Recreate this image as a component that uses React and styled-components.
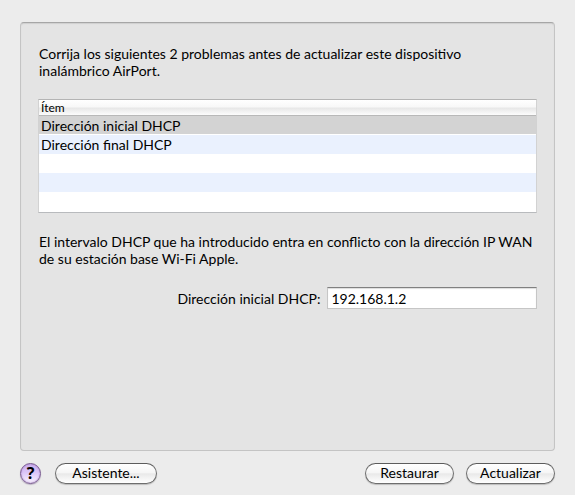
import React, { useState } from "react";
import styled, { createGlobalStyle } from "styled-components";

const GlobalStyle = createGlobalStyle`
  * {
    box-sizing: border-box;
  }
  body {
    margin: 0;
    background-color: #ececec;
    color: #000;
    font-family: "Lucida Grande", Lato, sans-serif;
    font-size: 14px;
    line-height: 17px;
  }
`;

const Window = styled.div`
  display: flex;
  flex-direction: column;
  min-height: 100vh;
  padding: 22px 20px 11px;
`;

const Panel = styled.main`
  flex: 1;
  padding: 22px 17px;
  background-color: #e4e4e4;
  border: 1px solid #c4c4c4;
  border-top-color: #a6a6a6;
  border-radius: 4px;
  box-shadow: inset 0 1px 1px #cfcfcf;
`;

const Message = styled.p`
  margin: 0 -4px 0 0;
  padding-left: 1px;
`;

const ProblemTable = styled.table`
  width: 100%;
  margin: 20px 0;
  border: 1px solid #d2d2d2;
  border-top-color: #b4b4b4;
  border-bottom: 1px solid #b8babd;
  border-spacing: 0;
  background-color: #fff;
`;

const HeaderCell = styled.th`
  height: 16px;
  padding: 0 2px;
  border-bottom: 1px solid #b8b8b8;
  background: linear-gradient(#fff 0%, #f8f8f8 45%, #e8e8e8 55%, #fcfcfc 100%);
  font-size: 12px;
  font-weight: normal;
  line-height: 15px;
  text-align: left;
`;

const Row = styled.tr`
  background-color: ${(props) => (props.$striped ? "#eaf1fe" : "#fff")};
  background-color: ${(props) => props.$selected && "#d3d3d3"};

  &:last-child td {
    height: 20px;
  }
`;

const Cell = styled.td`
  height: 19px;
  padding: ${(props) => (props.$selected ? "1px 2px 0" : "0 2px")};
  border-bottom: ${(props) => (props.$selected ? "1px solid #fff" : "none")};
  line-height: 17px;
`;

const Field = styled.div`
  display: flex;
  align-items: center;
  justify-content: flex-end;
  gap: 7px;
  margin-top: 20px;
`;

const Input = styled.input`
  width: 42%;
  height: 22px;
  padding: 1px 3px 0;
  border: 1px solid #c6c6c6;
  border-top-color: #808080;
  border-radius: 0;
  background-color: #fff;
  box-shadow: inset 0 1px 1px #dcdcdc;
  font: inherit;
  color: inherit;
  outline: none;
`;

const Footer = styled.footer`
  display: flex;
  align-items: center;
  gap: 12px;
  margin-top: 12px;
`;

const Spacer = styled.div`
  flex: 1;
`;

const Button = styled.button`
  height: 21px;
  min-width: 89px;
  padding: 0 11px 2px;
  border: 1px solid #6e6e6e;
  border-top-color: #5c5c5c;
  border-radius: 11px;
  background: linear-gradient(#fff 0%, #f6f6f6 45%, #e9e9e9 52%, #fff 100%);
  box-shadow: 0 1px 1px #bdbdbd;
  font: inherit;
  color: inherit;
`;

const WideButton = styled(Button)`
  min-width: 102px;
  margin-left: 2px;
`;

const HelpButton = styled.button`
  width: 21px;
  height: 21px;
  padding: 0;
  border: 1px solid #77588f;
  border-radius: 50%;
  background: linear-gradient(#cdb0ef 0%, #dcc6f8 45%, #e4d3fb 60%, #fbf4ff 100%);
  box-shadow: 0 1px 1px #b9b0c0, inset 0 0 2px #a884cc;
  font-family: "Noto Sans", sans-serif;
  font-size: 16px;
  font-weight: bold;
  line-height: 19px;
  color: #000;
`;

const rows = ["Dirección inicial DHCP", "Dirección final DHCP", "", "", ""];

const App = () => {
  const [selected, setSelected] = useState(0);
  const [address, setAddress] = useState("192.168.1.2");

  return (
    <>
      <GlobalStyle />
      <Window>
        <Panel>
          <Message>
            Corrija los siguientes 2 problemas antes de actualizar este
            dispositivo
            <br />
            inalámbrico AirPort.
          </Message>
          <ProblemTable>
            <thead>
              <tr>
                <HeaderCell scope="col">Ítem</HeaderCell>
              </tr>
            </thead>
            <tbody>
              {rows.map((row, index) => (
                <Row
                  key={index}
                  $striped={index % 2 === 1}
                  $selected={index === selected}
                  onClick={() => row && setSelected(index)}
                >
                  <Cell $selected={index === selected}>{row}</Cell>
                </Row>
              ))}
            </tbody>
          </ProblemTable>
          <Message>
            El intervalo DHCP que ha introducido entra en conflicto con la
            dirección IP WAN
            <br />
            de su estación base Wi-Fi Apple.
          </Message>
          <Field>
            <label htmlFor="address">Dirección inicial DHCP:</label>
            <Input
              id="address"
              type="text"
              value={address}
              onChange={(e) => setAddress(e.target.value)}
            />
          </Field>
        </Panel>
        <Footer>
          <HelpButton type="button">?</HelpButton>
          <WideButton type="button">Asistente...</WideButton>
          <Spacer />
          <Button type="button">Restaurar</Button>
          <Button type="button">Actualizar</Button>
        </Footer>
      </Window>
    </>
  );
};

export default App;
